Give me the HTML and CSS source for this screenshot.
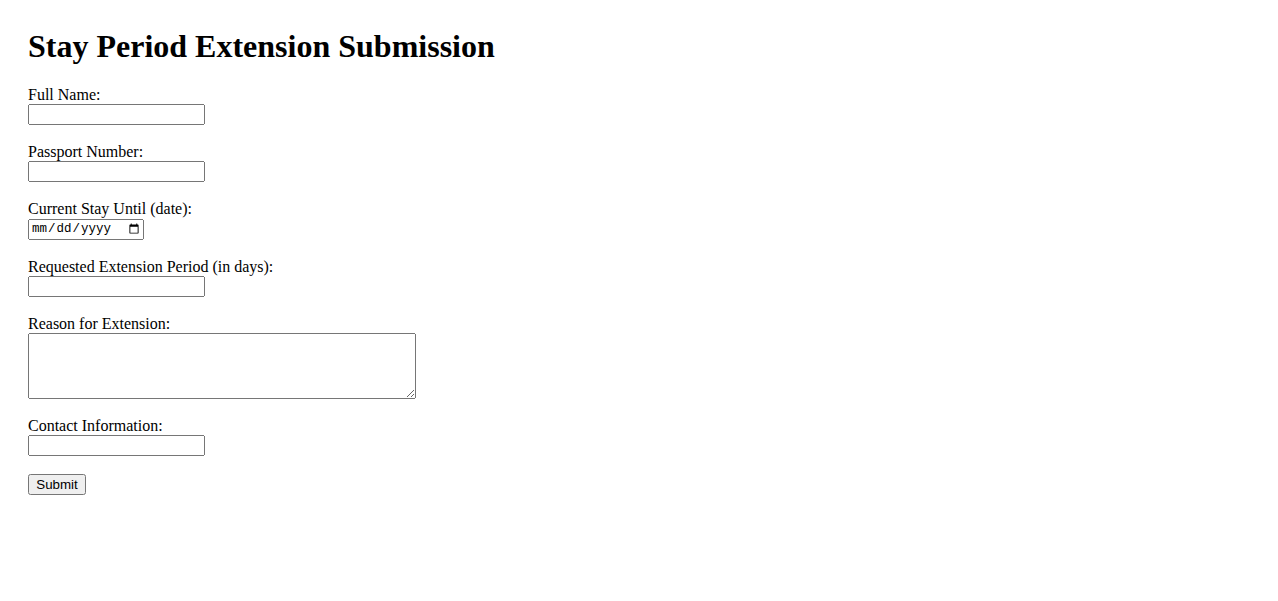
FILE: index.html
```html
<!DOCTYPE html>
<html lang="en">
<head>
    <meta charset="UTF-8">
    <meta name="viewport" content="width=device-width, initial-scale=1.0">
    <title>Stay Period Extension Submission</title>
    <link rel="stylesheet" href="styles.css">
</head>
<body>
    <h1>Stay Period Extension Submission</h1>
    <form id="extension-form">
        <label for="fullName">Full Name:</label><br>
        <input type="text" id="fullName" name="fullName"><br><br>

        <label for="passport">Passport Number:</label><br>
        <input type="text" id="passport" name="passport"><br><br>

        <label for="stayUntil">Current Stay Until (date):</label><br>
        <input type="date" id="stayUntil" name="stayUntil"><br><br>

        <label for="extensionDays">Requested Extension Period (in days):</label><br>
        <input type="number" id="extensionDays" name="extensionDays"><br><br>

        <label for="reason">Reason for Extension:</label><br>
        <textarea id="reason" name="reason" rows="4" cols="50"></textarea><br><br>

        <label for="contact">Contact Information:</label><br>
        <input type="text" id="contact" name="contact"><br><br>

        <button type="submit">Submit</button>
    </form>
</body>
</html>
```

FILE: styles.css
```css
body {
    font-family: "Liberation Serif", serif;
    margin: 0;
    padding: 28px;
}
h1 {
    margin-top: 0;
}
input, textarea {
    font-family: "Liberation Mono", monospace;
    box-sizing: border-box;
}
input[type="text"], input[type="number"] {
    width: 177px;
}
input[type="date"] {
    width: 116px;
    font-size: 12.5px;
}
textarea {
    width: 388px;
    height: 66px;
    vertical-align: bottom;
}
button {
    font-family: "Liberation Sans", Arial, sans-serif;
    width: 58px;
}
```
